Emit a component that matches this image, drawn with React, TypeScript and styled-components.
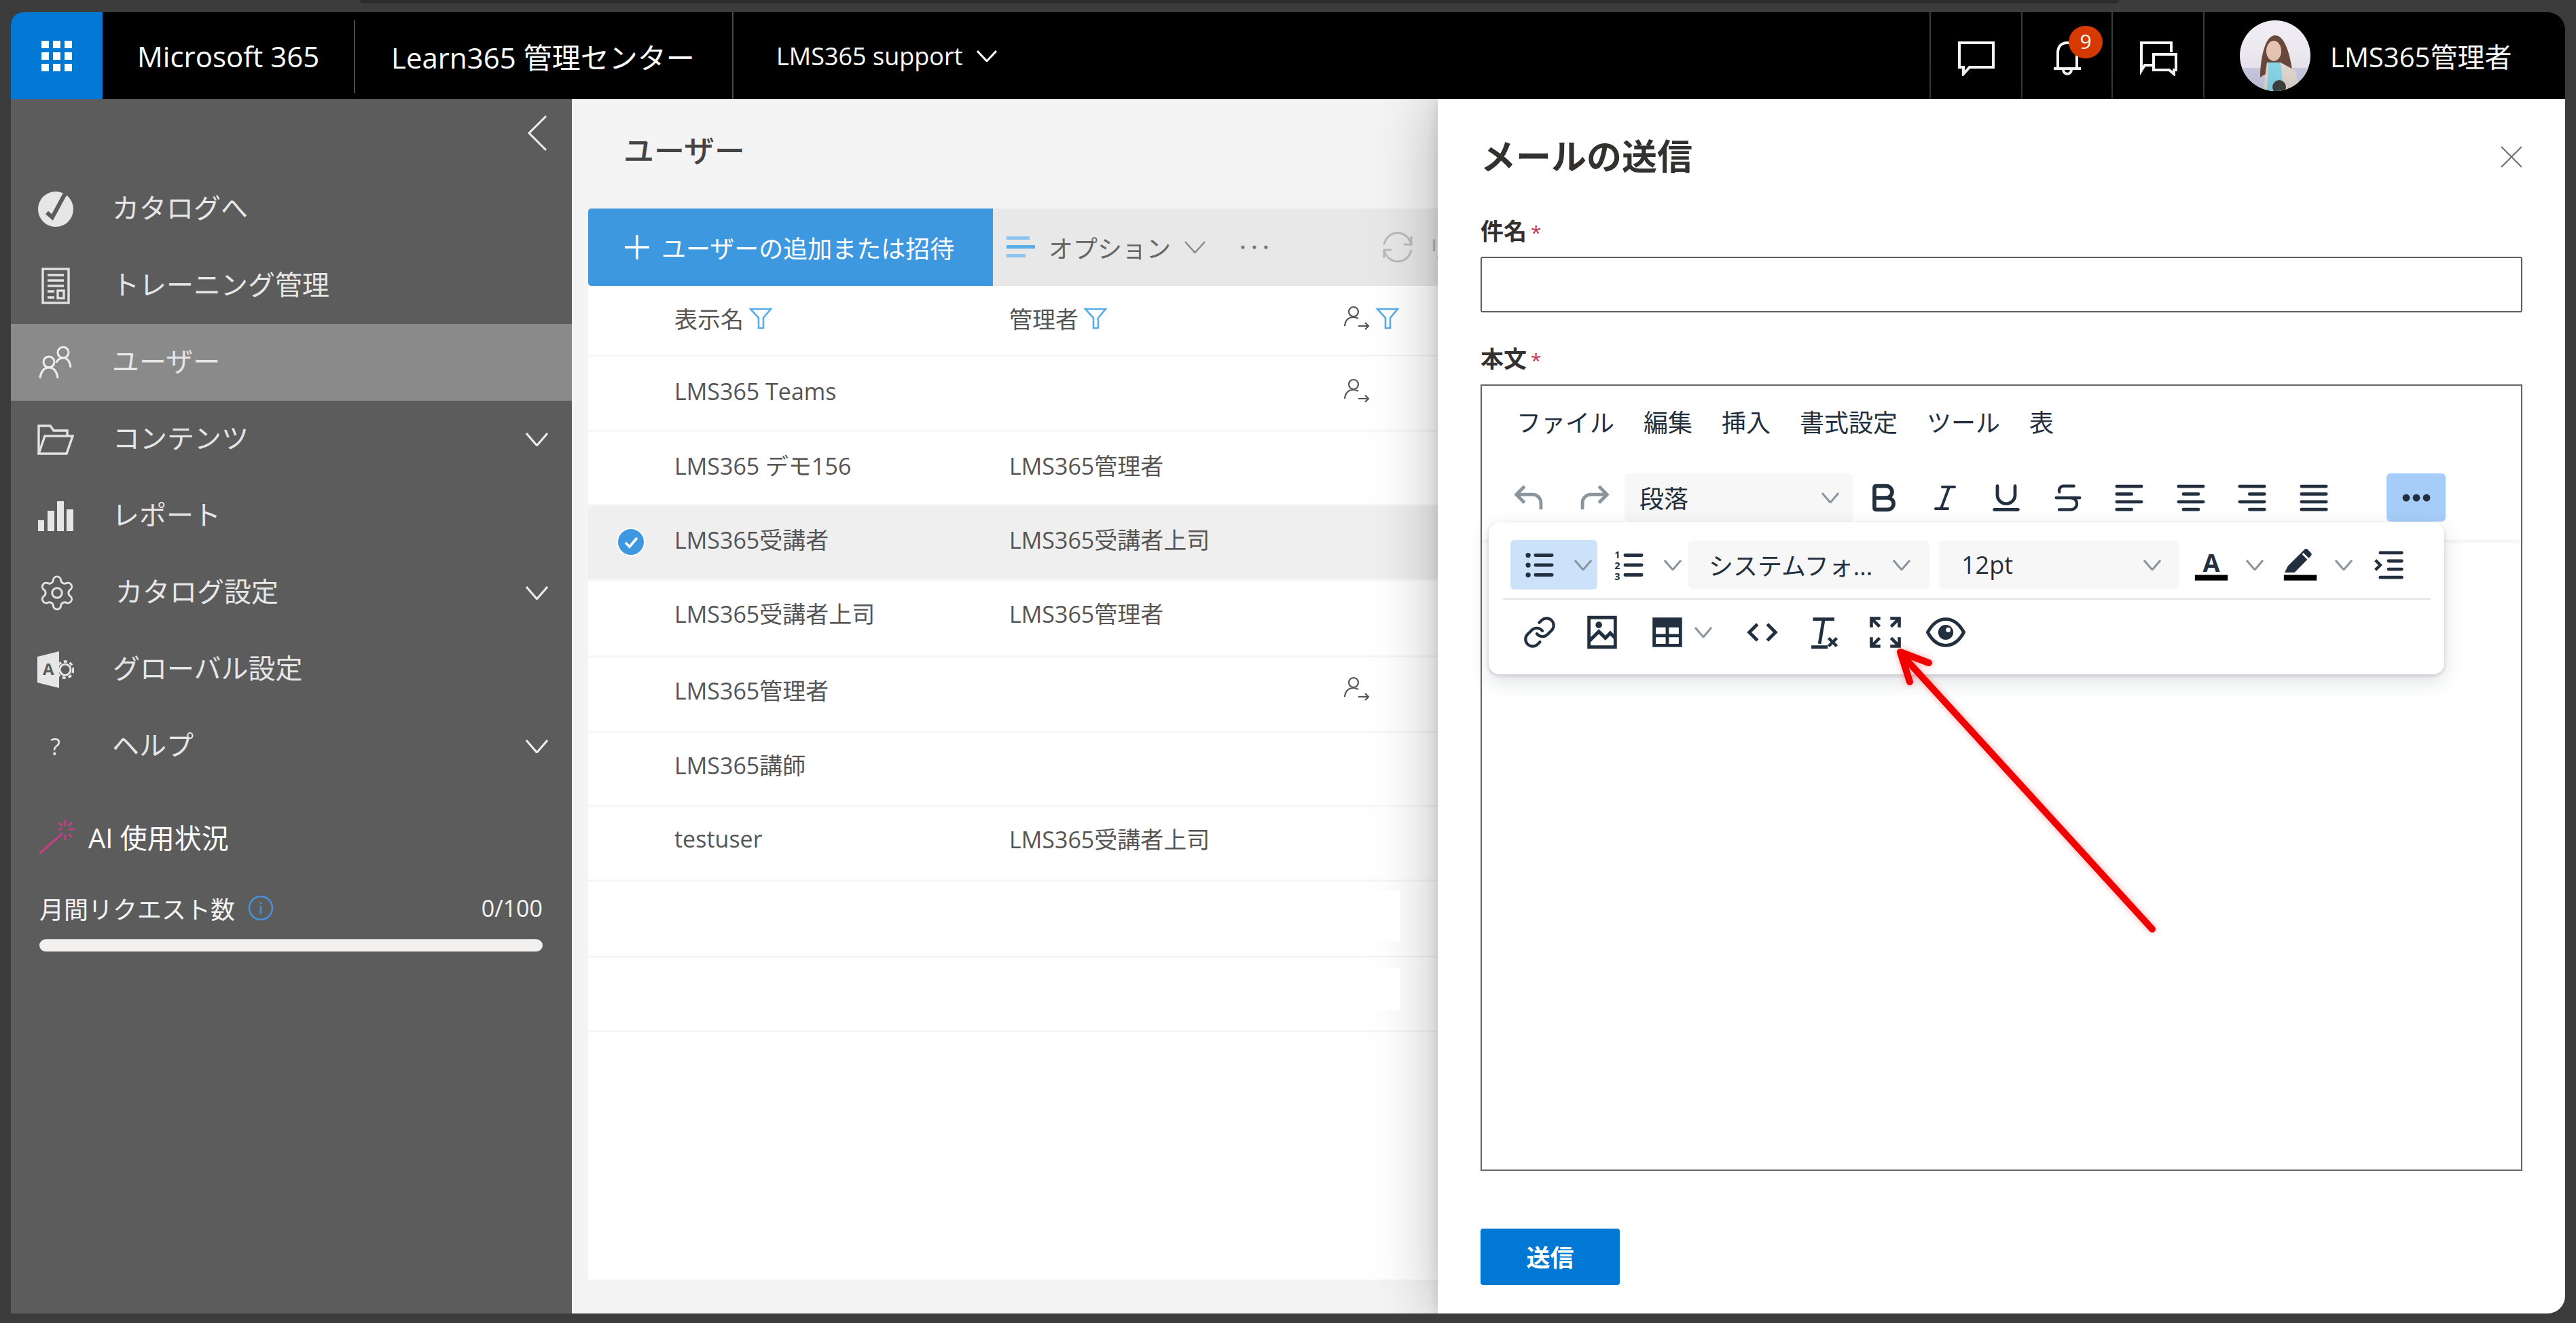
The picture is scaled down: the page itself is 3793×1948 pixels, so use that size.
import React from "react";
import styled, { createGlobalStyle } from "styled-components";
import { Settings, Link as LinkIcon, Bold, Italic, Underline, Strikethrough } from "lucide-react";

const ink = "#222f3e";
const grey = "#8b959d";

const Global = createGlobalStyle`
  html, body { margin: 0; padding: 0; background: #3c3c3c; }
  body { width: 3793px; height: 1948px; overflow: hidden; font-family: "Open Sans", "Noto Sans CJK JP", sans-serif; }
  * { box-sizing: border-box; }
`;

const Page = styled.div`
  position: relative;
  width: 3793px;
  height: 1948px;
  padding: 18px 16px 14px 16px;
  background: #3c3c3c;
`;
const TopStrip = styled.div`
  position: absolute;
  left: 530px;
  top: 0;
  width: 2590px;
  height: 5px;
  background: #2c2c2c;
  border-radius: 0 0 6px 6px;
`;
const Win = styled.div`
  width: 100%;
  height: 100%;
  display: flex;
  flex-direction: column;
  overflow: hidden;
  border-radius: 18px 26px 26px 0;
`;

/* ---------- header ---------- */
const Header = styled.header`
  flex: 0 0 128px;
  display: flex;
  align-items: stretch;
  background: #000;
  color: #fff;
`;
const Waffle = styled.div`
  flex: 0 0 135px;
  display: flex;
  align-items: center;
  justify-content: center;
  background: #0078d4;
`;
const WaffleGrid = styled.div`
  display: grid;
  grid-template-columns: repeat(3, 11px);
  grid-auto-rows: 11px;
  gap: 6px;
  > i { background: #fff; }
`;
const HeaderTitle = styled.div<{ $w: number; $pad: number; $size: number }>`
  flex: 0 0 ${(p) => p.$w}px;
  padding-left: ${(p) => p.$pad}px;
  display: flex;
  align-items: center;
  gap: 20px;
  font-size: ${(p) => p.$size}px;
  white-space: nowrap;
`;
const HeaderSep = styled.div<{ $short?: boolean }>`
  flex: 0 0 2px;
  background: #4a4a4a;
  margin: ${(p) => (p.$short ? "12px 0 9px" : "0")};
`;
const HeaderSpacer = styled.div`
  flex: 1;
`;
const HeaderCell = styled.div<{ $w: number }>`
  position: relative;
  flex: 0 0 ${(p) => p.$w}px;
  display: flex;
  align-items: center;
  justify-content: center;
  border-left: 2px solid #3c3c3c;
  padding-top: 8px;
`;
const Badge = styled.span`
  position: absolute;
  left: 68px;
  top: 20px;
  width: 50px;
  height: 48px;
  border-radius: 50%;
  background: #d83b01;
  color: #fff;
  font-size: 30px;
  line-height: 46px;
  text-align: center;
`;
const Profile = styled.div`
  flex: 0 0 533px;
  display: flex;
  align-items: center;
  gap: 29px;
  padding-left: 52px;
  border-left: 2px solid #3c3c3c;
  font-size: 40px;
  white-space: nowrap;
`;

/* ---------- body ---------- */
const Body = styled.div`
  flex: 1;
  min-height: 0;
  display: flex;
`;
const Sidebar = styled.nav`
  flex: 0 0 826px;
  display: flex;
  flex-direction: column;
  background: #5c5c5c;
  color: #e6e6e6;
`;
const Collapse = styled.div`
  flex: 0 0 105px;
  display: flex;
  align-items: center;
  justify-content: flex-end;
  padding: 0 36px 6px 0;
`;
const NavRow = styled.div<{ $active?: boolean }>`
  flex: 0 0 113px;
  display: flex;
  align-items: center;
  padding: 0 35px 0 39px;
  background: ${(p) => (p.$active ? "#8a8a8a" : "transparent")};
  font-size: 40px;
  white-space: nowrap;
`;
const NavIcon = styled.span`
  flex: 0 0 53px;
  height: 53px;
  display: flex;
  align-items: center;
  justify-content: center;
  font-size: 34px;
`;
const NavLabel = styled.span`
  flex: 1;
  margin: 0 0 8px 57px;
`;
const AiTitle = styled.div`
  display: flex;
  align-items: center;
  gap: 18px;
  margin: 50px 0 0 40px;
  height: 54px;
  font-size: 40px;
  color: #fff;
`;
const StatRow = styled.div`
  display: flex;
  align-items: center;
  margin: 56px 43px 0 42px;
  height: 44px;
  font-size: 36px;
  color: #f4f4f4;
`;
const StatLabel = styled.span`
  margin-right: 18px;
`;
const StatValue = styled.span`
  margin-left: auto;
  font-size: 34px;
`;
const Bar = styled.div`
  margin: 24px 43px 0 42px;
  height: 18px;
  border-radius: 9px;
  background: #f2f1ef;
`;

const Main = styled.main`
  flex: 0 0 1275px;
  display: flex;
  flex-direction: column;
  overflow: hidden;
  background: #f4f4f4;
  padding-bottom: 50px;
`;
const PageTitle = styled.h1`
  margin: 46px 0 55px 76px;
  height: 60px;
  font-size: 45px;
  line-height: 60px;
  font-weight: 500;
  color: #444;
`;
const CommandBar = styled.div`
  flex: 0 0 114px;
  margin-left: 24px;
  display: flex;
  align-items: center;
  background: #e8e8e8;
  color: #666;
  font-size: 36px;
  white-space: nowrap;
`;
const AddButton = styled.div`
  flex: 0 0 596px;
  align-self: stretch;
  display: flex;
  align-items: center;
  gap: 18px;
  padding-left: 54px;
  background: #3e98df;
  color: #fff;
  border-radius: 5px 0 0 5px;
`;
const CmdItem = styled.div<{ $ml: number; $faint?: boolean }>`
  flex: none;
  display: flex;
  align-items: center;
  gap: 20px;
  margin-left: ${(p) => p.$ml}px;
  color: ${(p) => (p.$faint ? "#b5b5b5" : "#666")};
`;
const List = styled.div`
  flex: 1;
  margin-left: 24px;
  background: #fff;
  display: flex;
  flex-direction: column;
  font-size: 34px;
  color: #555;
`;
const Row = styled.div<{ $h: number; $pb?: number; $selected?: boolean }>`
  position: relative;
  flex: 0 0 ${(p) => p.$h}px;
  display: grid;
  grid-template-columns: 127px 493px 492px 1fr;
  align-items: center;
  padding-bottom: ${(p) => p.$pb ?? 6}px;
  border-bottom: 3px solid #f6f6f6;
  background: ${(p) => (p.$selected ? "#efefef" : "#fff")};
  white-space: nowrap;
`;
const Cell = styled.div`
  display: flex;
  align-items: center;
  gap: 8px;
`;
const CheckCell = styled.div`
  display: flex;
  justify-content: flex-end;
  padding: 8px 43px 0 0;
`;
const Patch = styled.div<{ $top: number; $h: number }>`
  position: absolute;
  z-index: 2;
  right: 55px;
  top: ${(p) => p.$top}px;
  width: 320px;
  height: ${(p) => p.$h}px;
  background: #fff;
`;

/* ---------- drawer ---------- */
const Panel = styled.aside`
  position: relative;
  z-index: 1;
  flex: 1;
  min-width: 0;
  padding: 49px 63px 0 63px;
  background: #fff;
  box-shadow: 0 0 90px rgba(0, 0, 0, 0.28), 0 0 16px rgba(0, 0, 0, 0.12);
`;
const PanelHead = styled.div`
  display: flex;
  align-items: center;
  justify-content: space-between;
  height: 64px;
  margin-bottom: 61px;
`;
const PanelTitle = styled.h2`
  margin: 0;
  font-size: 52px;
  font-weight: 700;
  color: #323130;
`;
const CloseIcon = styled.svg`
  margin-top: 8px;
`;
const FieldLabel = styled.div<{ $mt?: number }>`
  height: 40px;
  margin-top: ${(p) => p.$mt || 0}px;
  margin-bottom: 18px;
  font-size: 34px;
  line-height: 40px;
  font-weight: 700;
  color: #323130;
  > b { color: #c4314b; margin-left: 6px; font-size: 28px; font-weight: 400; }
`;
const TextInput = styled.div`
  height: 82px;
  border: 2px solid #605e5c;
  border-radius: 3px;
`;
const Editor = styled.div`
  position: relative;
  height: 1158px;
  border: 2px solid #666;
`;
const EditorHead = styled.div`
  height: 227px;
  box-shadow: 0 3px 6px rgba(34, 47, 62, 0.07);
`;
const MenuBar = styled.div`
  height: 129px;
  padding: 20px 0 0 51px;
  display: flex;
  gap: 43px;
  font-size: 36px;
  color: ${ink};
  > span { height: 70px; line-height: 70px; }
`;
const ToolRow = styled.div`
  display: flex;
  align-items: center;
  padding-left: 21px;
  height: 71px;
`;
const ToolBtn = styled.div<{ $w?: number; $ml?: number; $on?: string }>`
  flex: 0 0 ${(p) => p.$w || 90.5}px;
  margin-left: ${(p) => p.$ml || 0}px;
  height: 71px;
  display: flex;
  align-items: center;
  justify-content: center;
  border-radius: 6px;
  background: ${(p) => p.$on || "transparent"};
`;
const Select = styled.div<{ $w: number; $pl: number; $pr: number; $ml?: number }>`
  flex: 0 0 ${(p) => p.$w}px;
  margin-left: ${(p) => p.$ml || 0}px;
  height: 71px;
  display: flex;
  align-items: center;
  justify-content: space-between;
  padding: 0 ${(p) => p.$pr}px 0 ${(p) => p.$pl}px;
  background: #f7f7f7;
  border-radius: 6px;
  font-size: 36px;
  color: ${ink};
  white-space: nowrap;
`;
const Popup = styled.div`
  position: absolute;
  left: 10px;
  top: 201px;
  width: 1407px;
  height: 224px;
  padding: 26px 20px 0 32px;
  background: #fff;
  border-radius: 16px;
  box-shadow: 0 2px 5px rgba(34, 47, 62, 0.2), 0 10px 30px rgba(34, 47, 62, 0.15);
`;
const PopRow = styled.div`
  display: flex;
  align-items: center;
  height: 73px;
`;
const PopRowLow = styled(PopRow)`
  height: 58px;
  margin-top: 19px;
`;
const PopDivider = styled.div`
  height: 2px;
  margin: 13px 0 0 -11px;
  width: 1366px;
  background: #e3e3e3;
`;
const SplitBtn = styled.div<{ $pl: number; $pr?: number; $ml?: number; $on?: boolean }>`
  display: flex;
  flex: none;
  align-items: center;
  gap: 22px;
  height: 73px;
  margin-left: ${(p) => p.$ml || 0}px;
  padding: 0 ${(p) => p.$pr || 0}px 0 ${(p) => p.$pl}px;
  border-radius: 6px;
  background: ${(p) => (p.$on ? "#cce2fa" : "transparent")};
`;
const SvgSlot = styled.span<{ $ml?: number }>`
  flex: none;
  display: flex;
  margin-left: ${(p) => p.$ml || 0}px;
`;
const SendButton = styled.div`
  width: 205px;
  height: 83px;
  margin-top: 85px;
  padding-bottom: 3px;
  display: flex;
  align-items: center;
  justify-content: center;
  border-radius: 4px;
  background: #0078d4;
  color: #fff;
  font-size: 35px;
  font-weight: 700;
`;
const Annotation = styled.svg`
  position: absolute;
  z-index: 5;
  left: 2760px;
  top: 930px;
  filter: drop-shadow(0 0 5px rgba(255, 0, 0, 0.35));
`;

/* ---------- drawings ---------- */
const Chevron = ({ w = 26, h = 16, color = grey, sw = 3 }: { w?: number; h?: number; color?: string; sw?: number }) => (
  <svg width={w} height={h} viewBox={`0 0 ${w} ${h}`} style={{ flex: "none" }}>
    <polyline points={`1,1 ${w / 2},${h - 1} ${w - 1},1`} fill="none" stroke={color} strokeWidth={sw} />
  </svg>
);

const Tiny = ({ children }: { children: React.ReactNode }) => (
  <svg width="58" height="58" viewBox="0 0 24 24" fill={ink}>{children}</svg>
);

const Lines = ({ rows }: { rows: [number, number][] }) => (
  <Tiny>
    {rows.map(([x, w], i) => <rect key={i} x={x} y={4 + i * 4.7} width={w} height="2" rx="1" />)}
  </Tiny>
);

const Funnel = () => (
  <svg width="34" height="32" viewBox="0 0 34 32" style={{ flex: "none" }}>
    <path d="M2 2h30L21 15v15h-7V15z" fill="none" stroke="#5aaee8" strokeWidth="2.6" />
  </svg>
);
const PersonArrow = () => (
  <svg width="40" height="38" viewBox="0 0 40 38" fill="none" stroke="#555" strokeWidth="2.2">
    <circle cx="15" cy="9" r="7" />
    <path d="M2 30c1-9 6-13 13-13 3 0 5 1 7 2" />
    <path d="M22 30h15M32 25l5 5-5 5" />
  </svg>
);
const Avatar = () => (
  <svg width="104" height="104" viewBox="0 0 104 104">
    <defs><clipPath id="av"><circle cx="52" cy="52" r="52" /></clipPath></defs>
    <g clipPath="url(#av)">
      <rect width="104" height="104" fill="#efecf3" />
      <rect y="70" width="104" height="34" fill="#cfd0e8" />
      <path d="M30 84c0-24 6-62 22-62s24 36 26 60c-14-10-36-8-48 2z" fill="#6b4a3c" />
      <ellipse cx="50" cy="45" rx="11" ry="15" fill="#e8c7b6" />
      <path d="M34 104l6-42 20 0 22 12 6 30z" fill="#e9dfd8" />
      <path d="M40 104l2-42 18 0 4 42z" fill="#8ddcf0" />
      <circle cx="58" cy="98" r="10" fill="#444" />
    </g>
  </svg>
);

const nav = [
  { label: "カタログへ", icon: (
    <svg width="53" height="54" viewBox="0 0 53 54">
      <circle cx="27" cy="27" r="26" fill="#e6e6e6" />
      <path d="M14 32l8 7L42 2" fill="none" stroke="#5c5c5c" strokeWidth="6" />
    </svg>) },
  { label: "トレーニング管理", icon: (
    <svg width="42" height="54" viewBox="0 0 42 54" fill="none" stroke="#e2e2e2" strokeWidth="3.4">
      <rect x="2" y="2" width="38" height="50" />
      <path d="M9 11h24M9 19h24M9 27h24M9 35h10M9 44h10" />
      <rect x="24" y="34" width="9" height="11" />
    </svg>) },
  { label: "ユーザー", active: true, icon: (
    <svg width="50" height="50" viewBox="0 0 50 50" fill="none" stroke="#eee" strokeWidth="3">
      <circle cx="36" cy="10" r="8" />
      <path d="M26 25c2-5 6-7 10-7 7 0 10 6 11 14" />
      <circle cx="15" cy="24" r="8" />
      <path d="M2 48c1-10 6-16 13-16s12 6 13 16" />
    </svg>) },
  { label: "コンテンツ", chevron: true, icon: (
    <svg width="54" height="46" viewBox="0 0 54 46" fill="none" stroke="#e2e2e2" strokeWidth="3.4">
      <path d="M2 44V3h17l5 7h20v8" />
      <path d="M2 44l9-26h41l-9 26z" />
    </svg>) },
  { label: "レポート", icon: (
    <svg width="52" height="44" viewBox="0 0 52 44" fill="#e6e6e6">
      <rect y="28" width="9" height="16" /><rect x="14" y="14" width="10" height="30" />
      <rect x="28" width="10" height="44" /><rect x="42" y="12" width="10" height="32" />
    </svg>) },
  { label: "カタログ設定", chevron: true, icon: <Settings size={58} color="#e2e2e2" strokeWidth={1.2} /> },
  { label: "グローバル設定", icon: (
    <svg width="54" height="54" viewBox="0 0 54 54">
      <path d="M0 8L32 0v54L0 46z" fill="#e6e6e6" />
      <text x="8" y="35" fontSize="24" fontWeight="700" fontFamily="Open Sans" fill="#5c5c5c">A</text>
      <circle cx="41" cy="27" r="8" fill="none" stroke="#e6e6e6" strokeWidth="3" />
      <circle cx="41" cy="27" r="12" fill="none" stroke="#e6e6e6" strokeWidth="3.5" strokeDasharray="5 4" />
    </svg>) },
  { label: "ヘルプ", chevron: true, icon: "?" },
];

const users: { name: string; manager?: string; h: number; pb?: number; person?: boolean; selected?: boolean; patch?: [number, number] }[] = [
  { name: "LMS365 Teams", h: 111, pb: 6, person: true },
  { name: "LMS365 デモ156", manager: "LMS365管理者", h: 109, pb: 10 },
  { name: "LMS365受講者", manager: "LMS365受講者上司", h: 110, pb: 10, selected: true },
  { name: "LMS365受講者上司", manager: "LMS365管理者", h: 113, pb: 16 },
  { name: "LMS365管理者", h: 111, pb: 14, person: true },
  { name: "LMS365講師", h: 109, pb: 14 },
  { name: "testuser", manager: "LMS365受講者上司", h: 110, pb: 14 },
  { name: "", h: 112, patch: [13, 75] },
  { name: "", h: 110, patch: [15, 62] },
];

export default function App() {
  return (
    <Page>
      <Global />
      <TopStrip />
      <Win>
        <Header>
          <Waffle>
            <WaffleGrid>{Array.from({ length: 9 }, (_, i) => <i key={i} />)}</WaffleGrid>
          </Waffle>
          <HeaderTitle $w={370} $pad={51} $size={42}>Microsoft 365</HeaderTitle>
          <HeaderSep $short />
          <HeaderTitle $w={555} $pad={53} $size={42}>Learn365 管理センター</HeaderTitle>
          <HeaderSep />
          <HeaderTitle $w={500} $pad={63} $size={36}>
            LMS365 support
            <Chevron w={30} h={17} color="#fff" />
          </HeaderTitle>
          <HeaderSpacer />
          <HeaderCell $w={135}>
            <svg width="56" height="52" viewBox="0 0 56 52" fill="none" stroke="#fff" strokeWidth="4">
              <path d="M3 3h50v36H18l-9 10V39H3z" />
            </svg>
          </HeaderCell>
          <HeaderCell $w={133}>
            <svg width="44" height="52" viewBox="0 0 44 52" fill="none" stroke="#fff" strokeWidth="4">
              <path d="M8 40V18C8 8 14 3 22 3s14 5 14 15v22" />
              <path d="M2 41h40M16 42c0 9 12 9 12 0" />
            </svg>
            <Badge>9</Badge>
          </HeaderCell>
          <HeaderCell $w={135}>
            <svg width="58" height="52" viewBox="0 0 58 52" fill="none" stroke="#fff" strokeWidth="4">
              <path d="M24 36H9l-5 8V3h44v14" />
              <path d="M22 20h33v23h-3v6l-7-6H22z" />
            </svg>
          </HeaderCell>
          <Profile>
            <Avatar />
            LMS365管理者
          </Profile>
        </Header>

        <Body>
          <Sidebar>
            <Collapse>
              <svg width="30" height="54" viewBox="0 0 30 54">
                <polyline points="28,2 3,27 28,52" fill="none" stroke="#eee" strokeWidth="3" />
              </svg>
            </Collapse>
            {nav.map((n) => (
              <NavRow key={n.label} $active={n.active}>
                <NavIcon>{n.icon}</NavIcon>
                <NavLabel>{n.label}</NavLabel>
                {n.chevron && <Chevron w={33} h={20} color="#eee" />}
              </NavRow>
            ))}
            <AiTitle>
              <svg width="56" height="54" viewBox="0 0 56 54" fill="none" stroke="#d4388c" strokeWidth="2.6">
                <path d="M2 52l34-30" strokeWidth="3" />
                <path d="M40 2v9M40 24v8M54 16h-9M30 16h5M30 6l5 5M50 6l-5 5M50 28l-5-5" />
              </svg>
              AI 使用状況
            </AiTitle>
            <StatRow>
              <StatLabel>月間リクエスト数</StatLabel>
              <svg width="40" height="38" viewBox="0 0 40 38" fill="none" stroke="#4a90d9" strokeWidth="2.6">
                <circle cx="20" cy="19" r="17" />
                <path d="M20 16v12M20 10v3" />
              </svg>
              <StatValue>0/100</StatValue>
            </StatRow>
            <Bar />
          </Sidebar>

          <Main>
            <PageTitle>ユーザー</PageTitle>
            <CommandBar>
              <AddButton>
                <svg width="36" height="36" viewBox="0 0 36 36" stroke="#fff" strokeWidth="3.4">
                  <path d="M18 0v36M0 18h36" />
                </svg>
                ユーザーの追加または招待
              </AddButton>
              <CmdItem $ml={20}>
                <svg width="42" height="32" viewBox="0 0 42 32">
                  <rect width="34" height="5" fill="#8fc4ee" />
                  <rect y="13" width="42" height="5" fill="#5aaee8" />
                  <rect y="26" width="28" height="5" fill="#8fc4ee" />
                </svg>
                オプション
                <Chevron w={31} h={18} color="#888" sw={2.4} />
              </CmdItem>
              <CmdItem $ml={52}>
                <svg width="40" height="6" viewBox="0 0 40 6" fill="#777">
                  <circle cx="3" cy="3" r="2.6" /><circle cx="20" cy="3" r="2.6" /><circle cx="37" cy="3" r="2.6" />
                </svg>
              </CmdItem>
              <CmdItem $ml={167} $faint>
                <svg width="48" height="48" viewBox="0 0 48 48" fill="none" stroke="#bbb" strokeWidth="3">
                  <path d="M44 20C41 8 32 3 24 3 14 3 6 10 4 20M4 28c3 12 12 17 20 17 10 0 18-7 20-17" />
                  <path d="M44 8v12H33M4 40V28h11" />
                </svg>
                リ
              </CmdItem>
            </CommandBar>
            <List>
              <Row $h={104}>
                <span />
                <Cell>表示名<Funnel /></Cell>
                <Cell>管理者<Funnel /></Cell>
                <Cell><PersonArrow /><Funnel /></Cell>
              </Row>
              {users.map((u, i) => (
                <Row key={i} $h={u.h} $pb={u.pb} $selected={u.selected}>
                  <CheckCell>
                    {u.selected && (
                      <svg width="42" height="42" viewBox="0 0 42 42">
                        <circle cx="21" cy="21" r="20" fill="#3e98df" stroke="#fff" strokeWidth="2" />
                        <path d="M13 22l6 6 11-13" fill="none" stroke="#fff" strokeWidth="3.6" />
                      </svg>
                    )}
                  </CheckCell>
                  <Cell>{u.name}</Cell>
                  <Cell>{u.manager}</Cell>
                  <Cell>{u.person && <PersonArrow />}</Cell>
                  {u.patch && <Patch $top={u.patch[0]} $h={u.patch[1]} />}
                </Row>
              ))}
            </List>
          </Main>

          <Panel>
            <PanelHead>
              <PanelTitle>メールの送信</PanelTitle>
              <CloseIcon width="32" height="32" viewBox="0 0 32 32" stroke="#777" strokeWidth="2.4">
                <path d="M1 1l30 30M31 1L1 31" />
              </CloseIcon>
            </PanelHead>
            <FieldLabel>件名<b>*</b></FieldLabel>
            <TextInput />
            <FieldLabel $mt={48}>本文<b>*</b></FieldLabel>
            <Editor>
              <EditorHead>
                <MenuBar>
                  <span>ファイル</span><span>編集</span><span>挿入</span><span>書式設定</span><span>ツール</span><span>表</span>
                </MenuBar>
                <ToolRow>
                  <ToolBtn $w={98}>
                    <svg width="58" height="58" viewBox="0 0 24 24" fill="none" stroke={grey} strokeWidth="2">
                      <path d="M9 5L4 10l5 5M4 10h10a5 5 0 0 1 5 5v4" />
                    </svg>
                  </ToolBtn>
                  <ToolBtn $w={91}>
                    <svg width="58" height="58" viewBox="0 0 24 24" fill="none" stroke={grey} strokeWidth="2">
                      <path d="M15 5l5 5-5 5M20 10H10a5 5 0 0 0-5 5v4" />
                    </svg>
                  </ToolBtn>
                  <Select $w={336} $pl={22} $pr={20}>段落<Chevron /></Select>
                  <ToolBtn><Bold size={52} color={ink} strokeWidth={2.6} /></ToolBtn>
                  <ToolBtn><Italic size={48} color={ink} strokeWidth={2} /></ToolBtn>
                  <ToolBtn><Underline size={52} color={ink} strokeWidth={2.2} /></ToolBtn>
                  <ToolBtn><Strikethrough size={52} color={ink} strokeWidth={2} /></ToolBtn>
                  <ToolBtn><Lines rows={[[3.5, 17], [3.5, 11], [3.5, 17], [3.5, 11]]} /></ToolBtn>
                  <ToolBtn><Lines rows={[[3.5, 17], [6.5, 11], [3.5, 17], [6.5, 11]]} /></ToolBtn>
                  <ToolBtn><Lines rows={[[3.5, 17], [9.5, 11], [3.5, 17], [9.5, 11]]} /></ToolBtn>
                  <ToolBtn><Lines rows={[[3.5, 17], [3.5, 17], [3.5, 17], [3.5, 17]]} /></ToolBtn>
                  <ToolBtn $w={87} $ml={62} $on="#a6cdf7">
                    <svg width="42" height="12" viewBox="0 0 42 12" fill={ink}>
                      <circle cx="6" cy="6" r="5.4" /><circle cx="21" cy="6" r="5.4" /><circle cx="36" cy="6" r="5.4" />
                    </svg>
                  </ToolBtn>
                </ToolRow>
              </EditorHead>
              <Popup>
                <PopRow>
                  <SplitBtn $pl={14} $pr={8} $on>
                    <Tiny>
                      <circle cx="5" cy="6" r="1.5" /><circle cx="5" cy="12" r="1.5" /><circle cx="5" cy="18" r="1.5" />
                      <rect x="8.5" y="5" width="12" height="2" rx="1" /><rect x="8.5" y="11" width="12" height="2" rx="1" /><rect x="8.5" y="17" width="12" height="2" rx="1" />
                    </Tiny>
                    <Chevron />
                  </SplitBtn>
                  <SplitBtn $pl={18} $pr={10}>
                    <Tiny>
                      <text x="3" y="8" fontSize="6" fontWeight="700" fontFamily="Open Sans">1</text>
                      <text x="3" y="14.5" fontSize="6" fontWeight="700" fontFamily="Open Sans">2</text>
                      <text x="3" y="21" fontSize="6" fontWeight="700" fontFamily="Open Sans">3</text>
                      <rect x="8.5" y="5" width="12" height="2" rx="1" /><rect x="8.5" y="11" width="12" height="2" rx="1" /><rect x="8.5" y="17" width="12" height="2" rx="1" />
                    </Tiny>
                    <Chevron />
                  </SplitBtn>
                  <Select $w={355} $pl={30} $pr={28}>システムフォ...<Chevron /></Select>
                  <Select $w={353} $pl={33} $pr={26} $ml={14}>12pt<Chevron /></Select>
                  <SplitBtn $pl={19}>
                    <Tiny>
                      <text x="12" y="16.2" textAnchor="middle" fontSize="15" fontWeight="700" fontFamily="Open Sans">A</text>
                      <rect x="2" y="18" width="20" height="3.4" fill="#000" />
                    </Tiny>
                    <Chevron />
                  </SplitBtn>
                  <SplitBtn $pl={25}>
                    <Tiny>
                      <path d="M2.5 16.5l2-4L14.5 2.6a1.500 1.500 0 0 1 2.100 0l1.800 1.800a1.500 1.500 0 0 1 0 2.100L8.500 16.500z" />
                      <path d="M13.500 5l3.500 3.500" stroke="#fff" strokeWidth="1.2" />
                      <rect x="2" y="18" width="20" height="3.4" fill="#000" />
                    </Tiny>
                    <Chevron />
                  </SplitBtn>
                  <SvgSlot $ml={24}>
                    <Tiny>
                      <rect x="6" y="3.5" width="15" height="2" rx="1" />
                      <rect x="11" y="8.5" width="10" height="2" rx="1" />
                      <rect x="11" y="13.5" width="10" height="2" rx="1" />
                      <rect x="6" y="18.5" width="15" height="2" rx="1" />
                      <path d="M4 9l3 3-3 3" fill="none" stroke={ink} strokeWidth="1.8" />
                    </Tiny>
                  </SvgSlot>
                </PopRow>
                <PopDivider />
                <PopRowLow>
                  <SvgSlot $ml={18}><LinkIcon size={50} color={ink} strokeWidth={2} /></SvgSlot>
                  <SvgSlot $ml={38}>
                    <Tiny>
                      <path fillRule="evenodd" d="M3 2h18v20H3zM5 4v11l5-5 4 4 3-3 2 2V4zM5 20h14v-4l-2-2-3 3-4-4-5 5z" />
                      <circle cx="10" cy="7.500" r="2" />
                    </Tiny>
                  </SvgSlot>
                  <SvgSlot $ml={38}>
                    <Tiny>
                      <path fillRule="evenodd" d="M3 3h18v18H3zM5 9v4h6V9zm8 0v4h6V9zM5 15v4h6v-4zm8 0v4h6v-4z" />
                    </Tiny>
                  </SvgSlot>
                  <SvgSlot $ml={11}><Chevron /></SvgSlot>
                  <SvgSlot $ml={45}>
                    <Tiny>
                      <path d="M9 7l-5 5 5 5M15 7l5 5-5 5" fill="none" stroke={ink} strokeWidth="2" />
                    </Tiny>
                  </SvgSlot>
                  <SvgSlot $ml={31}>
                    <Tiny>
                      <path d="M6 4h13M12.500 4L10 19M5 21h10" fill="none" stroke={ink} strokeWidth="2" />
                      <path d="M15.500 15.500l5 5M20.500 15.500l-5 5" fill="none" stroke={ink} strokeWidth="1.8" />
                    </Tiny>
                  </SvgSlot>
                  <SvgSlot $ml={34}>
                    <Tiny>
                      <path d="M3.500 9V3.500H9M3.500 3.500l5 5M15 3.500h5.500V9M20.500 3.500l-5 5M3.500 15v5.500H9M3.500 20.500l5-5M15 20.500h5.500V15M20.500 20.500l-5-5" fill="none" stroke={ink} strokeWidth="1.900" />
                    </Tiny>
                  </SvgSlot>
                  <SvgSlot $ml={31}>
                    <Tiny>
                      <path d="M1 12C4 6.500 7.500 4 12 4s8 2.500 11 8c-3 5.500-6.500 8-11 8S4 17.500 1 12z" fill="none" stroke={ink} strokeWidth="2" />
                      <circle cx="12" cy="12" r="4.600" />
                      <circle cx="13.500" cy="10.500" r="1.400" fill="#fff" />
                    </Tiny>
                  </SvgSlot>
                </PopRowLow>
              </Popup>
            </Editor>
            <SendButton>送信</SendButton>
          </Panel>
        </Body>
      </Win>
      <Annotation width="430" height="460" viewBox="0 0 430 460" fill="none" stroke="#f00000" strokeWidth="10" strokeLinecap="round" strokeLinejoin="round">
        <path d="M409 438L42 36" />
        <path d="M38 30L80 46M38 30L52 74" />
      </Annotation>
    </Page>
  );
}
